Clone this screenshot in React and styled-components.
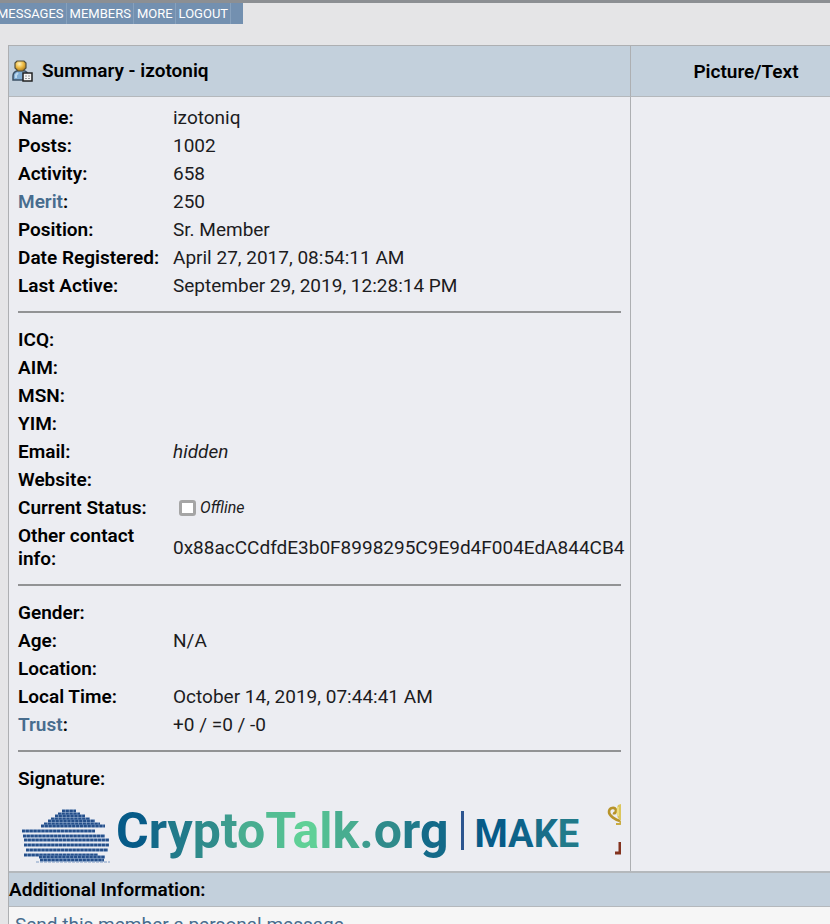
import React from "react";
//PACKAGES
import styled, { createGlobalStyle } from "styled-components";

//DATA
const NAV_ITEMS = ["MESSAGES", "MEMBERS", "MORE", "LOGOUT"];

const GENERAL = [
    { label: "Name", value: "izotoniq" },
    { label: "Posts", value: "1002" },
    { label: "Activity", value: "658" },
    { label: "Merit", value: "250", link: true },
    { label: "Position", value: "Sr. Member" },
    { label: "Date Registered", value: "April 27, 2017, 08:54:11 AM" },
    { label: "Last Active", value: "September 29, 2019, 12:28:14 PM" },
];

const CONTACT = [
    { label: "ICQ" },
    { label: "AIM" },
    { label: "MSN" },
    { label: "YIM" },
    { label: "Email", value: <em>hidden</em> },
    { label: "Website" },
    { label: "Current Status", value: <Status /> },
    {
        label: "Other contact info",
        value: "0x88acCCdfdE3b0F8998295C9E9d4F004EdA844CB4",
    },
];

const PERSONAL = [
    { label: "Gender" },
    { label: "Age", value: "N/A" },
    { label: "Location" },
    { label: "Local Time", value: "October 14, 2019, 07:44:41 AM" },
    { label: "Trust", value: "+0 / =0 / -0", link: true },
];

const BRAND = [
    ["C", "#065b88"],
    ["r", "#136a89"],
    ["y", "#217a8a"],
    ["p", "#2f8b8b"],
    ["t", "#3d9c8e"],
    ["o", "#48ad90"],
    ["T", "#53be93"],
    ["a", "#60d097"],
    ["l", "#53be93"],
    ["k", "#48ad90"],
    [".", "#3d9c8e"],
    ["o", "#2f8b8b"],
    ["r", "#217a8a"],
    ["g", "#136a89"],
];

const SLOGAN = [
    ["M", "#065b88"],
    ["A", "#0d6389"],
    ["K", "#196f89"],
    ["E", "#217a8a"],
];

//each line of the building: start x, end x, y
const BUILDING_LINES = [
    [40, 54, 2],
    [36, 58, 5],
    [33, 63, 7],
    [29, 68, 10],
    [26, 73, 12],
    [22, 78, 15],
    [19, 83, 17],
    [0, 73, 22],
    [1, 83, 27],
    [2, 87, 31],
    [2, 87, 36],
    [4, 86, 41],
    [2, 76, 46],
    [17, 83, 48],
    [18, 82, 51],
];

function Status() {
    return (
        <StatusBox>
            <StatusLight role="img" aria-label="Offline" />
            <StatusText>Offline</StatusText>
        </StatusBox>
    );
}

function ProfileIcon() {
    return (
        <svg width="22" height="24" viewBox="0 0 22 24" aria-hidden="true">
            <defs>
                <radialGradient id="head" cx="0.4" cy="0.3" r="0.7">
                    <stop offset="0" stopColor="#fff3c0" />
                    <stop offset="0.5" stopColor="#efbd45" />
                    <stop offset="1" stopColor="#b07c1c" />
                </radialGradient>
            </defs>
            <path
                d="M1 21V17C1 13.500 4 12 6 11.500H11C14 12 16 14 16 17V21Z"
                fill="#82aed4"
                stroke="#3c5064"
                strokeWidth="1.500"
            />
            <path d="M4 19V16L6 14" fill="none" stroke="#bdd9ee" strokeWidth="2" />
            <path
                d="M5 2H12L14 4V9L11 12H6L3 9V4Z"
                fill="url(#head)"
                stroke="#54503c"
                strokeWidth="1.200"
            />
            <rect x="11" y="14" width="9" height="8" fill="#f4f4f4" stroke="#222" strokeWidth="1.500" />
            <path d="M13 17H18M13 19.500H18" stroke="#9a9a9a" strokeDasharray="2 1" />
        </svg>
    );
}

function Building() {
    return (
        <svg width="88" height="54" viewBox="0 0 88 54" aria-hidden="true">
            {BUILDING_LINES.map(([x1, x2, y]) => (
                <g key={y} fill="none">
                    <path d={`M${x1} ${y}H${x2}`} stroke="#6f8fbb" strokeWidth="3" />
                    <path
                        d={`M${x1} ${y}H${x2}`}
                        stroke="#254f8a"
                        strokeWidth="2.400"
                        strokeDasharray="2.900 1"
                    />
                </g>
            ))}
            <path d="M14 53H88" stroke="#7f9cc4" strokeDasharray="3 1" />
        </svg>
    );
}

function Ornament() {
    return (
        <svg width="14" height="54" viewBox="0 0 14 54" aria-hidden="true">
            <path
                d="M13 17C9 16 2 12 2 8C2 3 8 3 9 6C9 8 8 10 6 9"
                fill="none"
                stroke="#b8942a"
                strokeWidth="2.600"
            />
            <path d="M14 0L11 1C9 5 9 10 11 14L14 17Z" fill="#dcc65c" />
            <path d="M11 3V12" stroke="#f2e692" strokeWidth="1.500" />
            <path d="M9 20H13L14 17" fill="none" stroke="#c9ab42" strokeWidth="2" />
            <path d="M13 38V49H8" fill="none" stroke="#83331f" strokeWidth="3" />
        </svg>
    );
}

function Details({ rows }) {
    return (
        <DetailsTable>
            <tbody>
                {rows.map(({ label, value, link }) => (
                    <tr key={label}>
                        <LabelCell scope="row">
                            {link ? <Link href="#">{label}</Link> : label}:
                        </LabelCell>
                        <ValueCell>{value}</ValueCell>
                    </tr>
                ))}
            </tbody>
        </DetailsTable>
    );
}

function App() {
    return (
        <Page>
            <GlobalStyle />
            <Nav>
                {NAV_ITEMS.map((item) => (
                    <NavLink href="#" key={item}>
                        {item}
                    </NavLink>
                ))}
            </Nav>
            <Panel>
                <Columns>
                    <TitleBar>
                        <ProfileIcon />
                        Summary - izotoniq
                    </TitleBar>
                    <PictureTitle>Picture/Text</PictureTitle>
                    <Summary>
                        <Details rows={GENERAL} />
                        <Divider />
                        <Details rows={CONTACT} />
                        <Divider />
                        <Details rows={PERSONAL} />
                        <Divider />
                        <SignatureLabel>Signature:</SignatureLabel>
                        <Signature>
                            <Building />
                            <Brand href="#">
                                {BRAND.map(([letter, color], i) => (
                                    <Letter key={i} $color={color}>
                                        {letter}
                                    </Letter>
                                ))}
                            </Brand>
                            <Bar />
                            <Slogan href="#">
                                {SLOGAN.map(([letter, color]) => (
                                    <Letter key={letter} $color={color}>
                                        {letter}
                                    </Letter>
                                ))}
                            </Slogan>
                            <Ornament />
                        </Signature>
                    </Summary>
                    <Picture />
                </Columns>
                <AdditionalTitle>Additional Information:</AdditionalTitle>
                <Additional>
                    <MessageLink href="#">Send this member a personal message.</MessageLink>
                </Additional>
            </Panel>
        </Page>
    );
}

export default App;

const GlobalStyle = createGlobalStyle`
    * {
        box-sizing: border-box;
    }
    body {
        margin: 0;
        background-color: #e5e5e7;
        font-family: Roboto, sans-serif;
        font-size: 19px;
        line-height: 23px;
        color: #000;
    }
    a {
        text-decoration: none;
    }
    svg {
        display: block;
        flex-shrink: 0;
    }
`;

const Page = styled.main`
    height: 100vh;
    overflow: hidden;
    border-top: 3px solid #8c8f93;
`;

const Nav = styled.nav`
    display: flex;
    width: fit-content;
    margin-left: -6px;
    padding-right: 12px;
    background-color: #7390b0;
`;

const NavLink = styled.a`
    padding: 0 2px 0 3px;
    border-right: 1px solid #87a1bd;
    font-size: 13px;
    line-height: 21px;
    color: #fff;
`;

const Panel = styled.section`
    margin: 21px -32px 0 8px;
    border: 1px solid #adafb2;
`;

const Columns = styled.div`
    display: grid;
    grid-template-columns: minmax(0, 1fr) 231px;
`;

const TitleBar = styled.h1`
    display: flex;
    align-items: center;
    gap: 8px;
    height: 51px;
    margin: 0;
    padding: 0 0 1px 3px;
    border-bottom: 1px solid #b4b8bc;
    background-color: #c3d0dc;
    font-size: 19px;
    font-weight: 600;
`;

const PictureTitle = styled.h2`
    display: flex;
    align-items: center;
    justify-content: center;
    margin: 0;
    border-left: 1px solid #adafb2;
    border-bottom: 1px solid #b4b8bc;
    background-color: #c3d0dc;
    font-size: 19px;
    font-weight: 600;
`;

const Summary = styled.div`
    padding: 6px 9px;
    background-color: #ecedf2;
`;

const Picture = styled.div`
    border-left: 1px solid #adafb2;
    background-color: #ecedf2;
`;

const DetailsTable = styled.table`
    width: 100%;
    border-collapse: collapse;
    table-layout: fixed;
`;

const LabelCell = styled.th`
    width: 155px;
    padding: 3px 10px 2px 0;
    font-weight: 600;
    text-align: left;
`;

const ValueCell = styled.td`
    padding: 3px 0 2px;
    color: #1c1c1e;
    white-space: nowrap;
`;

const Link = styled.a`
    color: #476c8e;
`;

const Divider = styled.hr`
    height: 2px;
    margin: 12px 0;
    border: none;
    background-color: #929395;
`;

const StatusBox = styled.span`
    display: flex;
    align-items: center;
    gap: 4px;
    padding-left: 6px;
`;

const StatusLight = styled.span`
    width: 17px;
    height: 16px;
    border: 3px solid #a5a5a5;
    border-radius: 3px;
    background-color: #fff;
`;

const StatusText = styled.em`
    font-size: 16px;
`;

const SignatureLabel = styled.div`
    padding: 3px 0 2px;
    font-weight: 600;
`;

const Signature = styled.div`
    display: flex;
    align-items: center;
    height: 73px;
    padding: 4px 0 0 4px;
    overflow: hidden;

    & > svg:first-child {
        margin-top: 10px;
    }
    & > svg:last-child {
        margin-left: auto;
    }
`;

const Brand = styled.a`
    margin-left: 6px;
    font-size: 50px;
    font-weight: 700;
    line-height: 60px;
`;

const Slogan = styled.a`
    margin: 6px 0 0 11px;
    font-size: 38px;
    font-weight: 700;
    line-height: 48px;
`;

const Letter = styled.span`
    color: ${(props) => props.$color};
`;

const Bar = styled.span`
    width: 3px;
    height: 39px;
    margin-left: 12px;
    background-color: #2d5590;
`;

const AdditionalTitle = styled.h2`
    margin: 0;
    padding: 5px 0;
    border-top: 2px solid #b4b8bc;
    border-bottom: 1px solid #b4b8bc;
    background-color: #c3d0dc;
    font-size: 19px;
    font-weight: 600;
`;

const Additional = styled.div`
    padding: 6px;
    background-color: #f6f6f6;
`;

const MessageLink = styled.a`
    color: #476c8e;
`;
